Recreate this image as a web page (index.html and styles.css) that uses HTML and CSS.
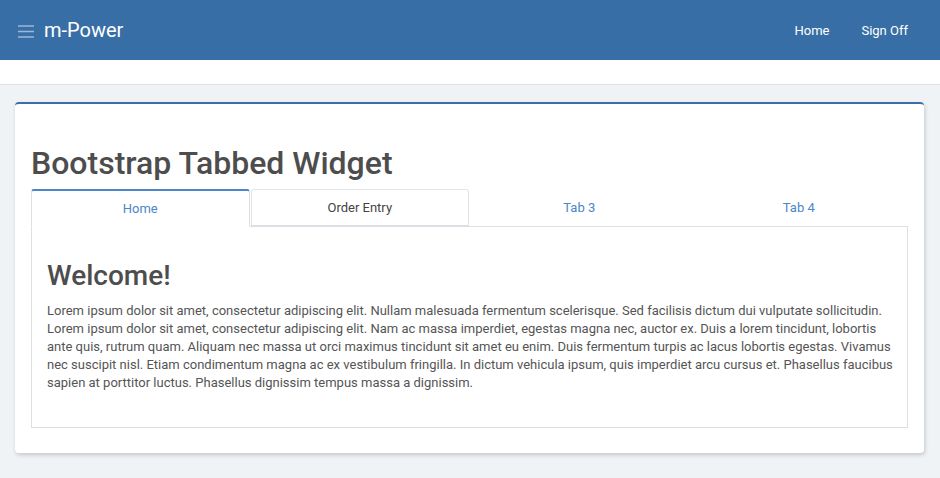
FILE: index.html
```html
<!DOCTYPE html>
<html>
<head>
<meta charset="utf-8">
<link rel="stylesheet" href="styles.css">
</head>
<body>
<header class="topbar">
  <div class="brand">
    <svg class="burger" width="16" height="14" viewBox="0 0 16 14"><path d="M0 2h16M0 7.5h16M0 13h16" stroke="#9db7d8" stroke-width="1.6"/></svg>
    <span class="brand-name">m-Power</span>
  </div>
  <nav class="topnav">
    <a class="navlink">Home</a>
    <a class="navlink">Sign Off</a>
  </nav>
</header>
<div class="subbar"></div>
<main class="main">
  <section class="card">
    <h1 class="title">Bootstrap Tabbed Widget</h1>
    <ul class="tabs">
      <li class="tab active">Home</li>
      <li class="tab bordered">Order Entry</li>
      <li class="tab">Tab 3</li>
      <li class="tab">Tab 4</li>
    </ul>
    <div class="pane">
      <h2 class="welcome">Welcome!</h2>
      <p class="lorem">Lorem ipsum dolor sit amet, consectetur adipiscing elit. Nullam malesuada fermentum scelerisque. Sed facilisis dictum dui vulputate sollicitudin. Lorem ipsum dolor sit amet, consectetur adipiscing elit. Nam ac massa imperdiet, egestas magna nec, auctor ex. Duis a lorem tincidunt, lobortis ante quis, rutrum quam. Aliquam nec massa ut orci maximus tincidunt sit amet eu enim. Duis fermentum turpis ac lacus lobortis egestas. Vivamus nec suscipit nisl. Etiam condimentum magna ac ex vestibulum fringilla. In dictum vehicula ipsum, quis imperdiet arcu cursus et. Phasellus faucibus sapien at porttitor luctus. Phasellus dignissim tempus massa a dignissim.</p>
    </div>
  </section>
</main>
</body>
</html>
```
FILE: styles.css
```css
html, body { margin: 0; padding: 0; }
body {
  font-family: Roboto, "Liberation Sans", sans-serif;
  background: #f0f3f6;
  color: #4a4a4a;
  height: 478px;
  overflow: hidden;
}
.topbar {
  height: 60px;
  background: #386ea6;
  display: flex;
  align-items: center;
  justify-content: space-between;
  padding: 0 16px 0 18px;
}
.brand { display: flex; align-items: center; gap: 10px; }
.burger { display: block; margin-top: 1px; }
.brand-name { color: #fff; font-size: 20px; font-weight: 400; }
.topnav { display: flex; }
.navlink {
  color: #fff;
  font-size: 13px;
  font-weight: 400;
  padding: 0 16px;
}
.subbar {
  height: 24px;
  background: #fff;
  border-bottom: 1px solid #dcdfe3;
}
.main { padding: 17px 16px 0 15px; }
.card {
  background: #fff;
  border-top: 2px solid #3a6ea8;
  border-radius: 4px;
  box-shadow: 1px 2px 4px rgba(0,0,0,0.18);
  padding: 40px 16px 25px 16px;
}
.title {
  margin: 0 0 7px 0;
  font-size: 32px;
  font-weight: 500;
  line-height: 38px;
  color: #4d4d4d;
}
.tabs {
  list-style: none;
  margin: 0;
  padding: 0;
  display: flex;
  height: 37px;
}
.tab {
  flex: 1;
  text-align: center;
  font-size: 13px;
  color: #4a86c8;
  padding-top: 10px;
  box-sizing: border-box;
  border: 1px solid transparent;
  border-radius: 3px 3px 0 0;
  margin-right: 1px;
}
.tab.active {
  border: 1px solid #dcdfe3;
  border-top: 2px solid #4a86c8;
  border-bottom-color: #fff;
  padding-top: 10px;
  background: #fff;
  position: relative;
  z-index: 1;
  height: 38px;
}
.tab.bordered {
  border: 1px solid #e2e4e8;
  border-bottom: 1px solid #dcdfe3;
  color: #444;
  padding-top: 10px;
  height: 37px;
}
.tab:last-child { margin-right: 0; }
.pane {
  border: 1px solid #dcdfe3;
  padding: 32px 12px 35px 15px;
}
.welcome {
  margin: 0 0 9px 0;
  font-size: 28px;
  font-weight: 500;
  line-height: 34px;
  color: #4d4d4d;
}
.lorem {
  margin: 0;
  font-size: 13px;
  line-height: 18px;
  color: #555;
}
```
